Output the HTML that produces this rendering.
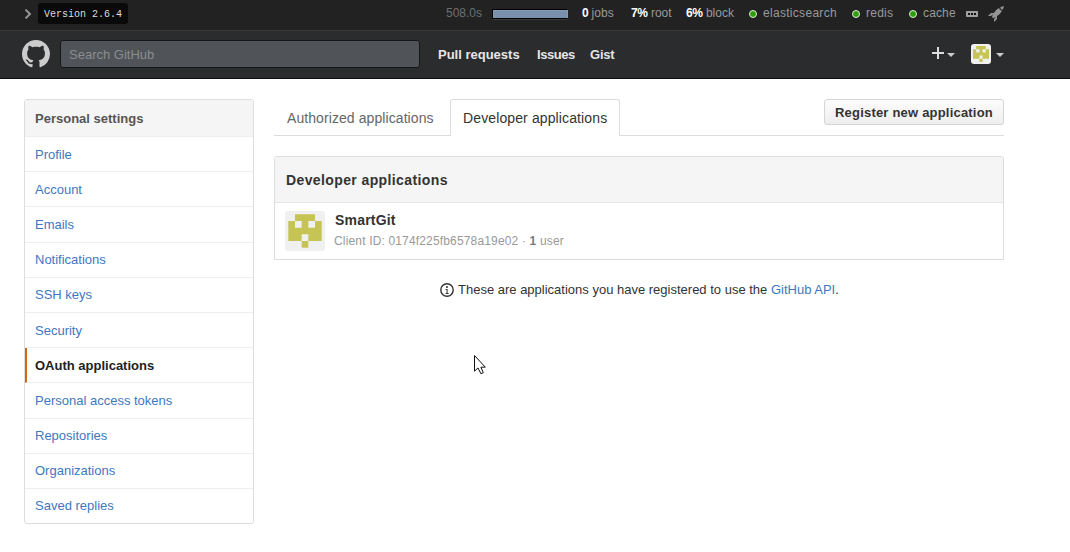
<!DOCTYPE html>
<html><head><meta charset="utf-8">
<style>
*{box-sizing:border-box;margin:0;padding:0}
html,body{width:1070px;height:552px;overflow:hidden;background:#fff}
body{font-family:"Liberation Sans",sans-serif;font-size:13px;color:#333;position:relative}
.abs{position:absolute}
#topbar{position:absolute;left:0;top:0;width:1070px;height:30px;background:#222}
#navline{position:absolute;left:0;top:30px;width:1070px;height:1px;background:#38393b}
#nav{position:absolute;left:0;top:31px;width:1070px;height:47px;background:#2b2c2e}
#navbot{position:absolute;left:0;top:78px;width:1070px;height:1px;background:#0c0c0c}
.ver{position:absolute;left:38px;top:3px;width:90px;height:21px;background:#0a0a0a;border-radius:3px;font-family:"Liberation Mono",monospace;font-size:10px;color:#dcdcdc;line-height:23px;padding-left:6px}
.tb{position:absolute;top:6px;font-size:12px;line-height:14px;color:#9a9a9a;white-space:nowrap}
.tb b{color:#fff;letter-spacing:-.4px}
.dot{position:absolute;top:10px;width:8px;height:8px;border-radius:50%;background:#2f9e0c;border:1px solid #e3f1dc}
.search{position:absolute;left:60px;top:40px;width:360px;height:28px;background:#505357;border:1px solid #151618;border-radius:3px;color:#8a8d90;font-size:13px;line-height:27px;padding-left:8px}
.nl{position:absolute;top:47px;font-weight:bold;color:#e6e6e6;font-size:13px;line-height:15px}
/* sidebar */
.side{position:absolute;left:24px;top:99px;width:230px;height:425px;border:1px solid #ddd;border-radius:3px;overflow:hidden}
.side .hd{height:37px;background:#f5f5f5;border-bottom:1px solid #eee;font-weight:bold;color:#555;padding:0 10px;line-height:38px}
.side .it{border-bottom:1px solid #eee;color:#4078c0;padding:8.6px 10px 7.4px;line-height:18.21px}
.side .it.sel{font-weight:bold;color:#222;border-left:2px solid #d26911;padding-left:8px}
.tabs{position:absolute;left:274px;top:135px;width:730px;height:1px;background:#ddd}
.tab1{position:absolute;left:287px;top:110px;font-size:14px;color:#666;line-height:17px;letter-spacing:.08px}
.tab2{position:absolute;left:450px;top:99px;width:170px;height:37px;background:#fff;border:1px solid #ddd;border-bottom:0;border-radius:3px 3px 0 0;font-size:14px;color:#333;line-height:37px;padding-left:12px;letter-spacing:.12px}
.btn{position:absolute;left:824px;top:99px;width:180px;height:26px;border:1px solid #d5d5d5;border-radius:3px;background:linear-gradient(#fcfcfc,#eee);font-weight:bold;color:#333;line-height:26px;padding-left:10px;letter-spacing:.2px}
.box{position:absolute;left:274px;top:156px;width:730px;height:104px;border:1px solid #ddd;border-radius:3px 3px 0 0;overflow:hidden}
.box .row{position:absolute;left:0;top:0;width:100%;height:100%}
.box .bh{height:46px;background:#f5f5f5;border-bottom:1px solid #e5e5e5;font-weight:bold;font-size:14px;color:#333;line-height:46px;padding-left:11px;letter-spacing:.39px}
</style></head><body>
<div id="topbar"></div><div id="navline"></div><div id="nav"></div><div id="navbot"></div>

<svg class="abs" style="left:24px;top:9px" width="8" height="10" viewBox="0 0 8 10"><path d="M1.5 0.6 L6 5 L1.5 9.4" fill="none" stroke="#999" stroke-width="1.9"/></svg>
<div class="ver">Version 2.6.4</div>
<div class="tb" style="left:446px;color:#6f6f6f">508.0s</div>
<div class="abs" style="left:492px;top:9px;width:75px;height:10px;background:#000"></div><div class="abs" style="left:493px;top:10px;width:75px;height:8px;background:#7890ab;box-shadow:inset 0 1px #819bb8,inset 1px 0 #819bb8,inset -1px 0 #819bb8"></div><div class="abs" style="left:493px;top:19px;width:74px;height:1px;background:#3a3a3a"></div>
<div class="tb" style="left:582px"><b>0</b> jobs</div>
<div class="tb" style="left:631px"><b>7%</b> root</div>
<div class="tb" style="left:686px"><b>6%</b> block</div>
<div class="dot" style="left:749px"></div><div class="tb" style="left:763px;letter-spacing:.3px">elasticsearch</div>
<div class="dot" style="left:852px"></div><div class="tb" style="left:866px;letter-spacing:.25px">redis</div>
<div class="dot" style="left:909px"></div><div class="tb" style="left:923px;letter-spacing:.15px">cache</div>

<div class="search">Search GitHub</div>
<div class="nl" style="left:438px">Pull requests</div>
<div class="nl" style="left:537px;letter-spacing:-.45px">Issues</div>
<div class="nl" style="left:590px;letter-spacing:-.2px">Gist</div>

<div class="side">
<div class="hd">Personal settings</div>
<div class="it">Profile</div>
<div class="it">Account</div>
<div class="it">Emails</div>
<div class="it">Notifications</div>
<div class="it">SSH keys</div>
<div class="it">Security</div>
<div class="it sel">OAuth applications</div>
<div class="it">Personal access tokens</div>
<div class="it">Repositories</div>
<div class="it">Organizations</div>
<div class="it" style="border-bottom:0">Saved replies</div>
</div>

<div class="tabs"></div>
<div class="tab1">Authorized applications</div>
<div class="tab2">Developer applications</div>
<div class="btn">Register new application</div>

<div class="box">
<div class="bh">Developer applications</div>
<div class="row">
<svg class="abs" style="left:10px;top:54px" width="40" height="40" viewBox="0 0 40 40"><rect width="40" height="40" rx="3" fill="#f0f0f0"/><path transform="translate(3.3 3.3) scale(6.68)" fill="#c6c455" d="M1 0h3v1h-3zM0 1h1v3h-1zM4 1h1v3h-1zM2 1h1v1h-1zM1 2h3v1h-3zM1 3h1v1h-1zM3 3h1v1h-1zM2 4h1v1h-1z"/></svg>
<div class="abs" style="left:60px;top:55px;font-weight:bold;font-size:14px;color:#333;line-height:17px;letter-spacing:.2px">SmartGit</div>
<div class="abs" style="left:59px;top:77px;font-size:12px;color:#999;line-height:15px;white-space:nowrap;letter-spacing:.16px">Client ID: 0174f225fb6578a19e02 &middot; <b style="color:#7a7a7a">1</b> user</div>
</div>
</div>


<svg class="abs" style="left:22px;top:40px" width="28" height="28" viewBox="0 0 16 16"><path fill="#ccc" d="M8 0C3.58 0 0 3.58 0 8c0 3.54 2.29 6.53 5.47 7.59.4.07.55-.17.55-.38 0-.19-.01-.82-.01-1.49-2.01.37-2.53-.49-2.69-.94-.09-.23-.48-.94-.82-1.130-.28-.15-.68-.52-.01-.53.63-.01 1.08.58 1.23.82.72 1.21 1.870.87 2.330.66.07-.52.28-.87.51-1.07-1.78-.2-3.64-.89-3.64-3.95 0-.87.31-1.59.82-2.15-.08-.2-.36-1.02.08-2.12 0 0 .67-.21 2.2.82.64-.18 1.32-.27 2-.27.68 0 1.36.09 2 .27 1.53-1.04 2.2-.82 2.2-.82.44 1.1.16 1.92.08 2.12.51.56.82 1.27.82 2.15 0 3.07-1.87 3.75-3.65 3.95.29.25.54.73.54 1.48 0 1.07-.01 1.93-.01 2.2 0 .21.15.46.55.38A8.013 8.013 0 0016 8c0-4.42-3.58-8-8-8z"/></svg>
<div class="abs" style="left:932px;top:52px;width:12px;height:2px;background:#ddd"></div>
<div class="abs" style="left:937px;top:47px;width:2px;height:12px;background:#ddd"></div>
<svg class="abs" style="left:947px;top:53px" width="8" height="4" viewBox="0 0 8 4"><path d="M0 0H8L4 4Z" fill="#ccc"/></svg>
<svg class="abs" style="left:971px;top:44px" width="20" height="20" viewBox="0 0 20 20"><rect width="20" height="20" rx="3" fill="#f0f0f0"/><path transform="translate(2 2) scale(3.2)" fill="#c6c455" d="M1 0h3v1h-3zM0 1h1v3h-1zM4 1h1v3h-1zM2 1h1v1h-1zM1 2h3v1h-3zM1 3h1v1h-1zM3 3h1v1h-1zM2 4h1v1h-1z"/></svg>
<svg class="abs" style="left:996px;top:53px" width="8" height="4" viewBox="0 0 8 4"><path d="M0 0H8L4 4Z" fill="#ccc"/></svg>
<svg class="abs" style="left:966px;top:11px" width="12" height="6" viewBox="0 0 12 6"><rect width="12" height="6" rx=".8" fill="#a0a0a0"/><rect x="2" y="2" width="2" height="2" fill="#111"/><rect x="5" y="2" width="2" height="2" fill="#111"/><rect x="8" y="2" width="2" height="2" fill="#111"/></svg>
<svg class="abs" style="left:988px;top:6px" width="16" height="16" viewBox="0 0 16 16"><path fill="#949494" d="M12.17 3.83c-.27-.27-.47-.55-.63-.88-.16-.31-.27-.66-.34-1.020-.58.33-1.16.7-1.73 1.130-.58.44-1.140.94-1.690 1.48-.7.7-1.330 1.81-1.780 2.45H3L0 10h3l2-2c-.34.77-1.02 2.98-1 3l1 1c.02.02 2.23-.64 3-1l-2 2v3l3-3v-3c.64-.45 1.75-1.09 2.45-1.78.55-.55 1.05-1.13 1.47-1.7.44-.58.81-1.16 1.14-1.72-.36-.08-.7-.19-1.03-.34a3.39 3.39 0 01-.86-.63zM16 0s-.09.38-.3 1.06c-.2.7-.55 1.58-1.06 2.66-.7-.08-1.27-.33-1.66-.72-.39-.39-.63-.94-.7-1.64C13.360.84 14.230.48 14.920.28 15.620.08 16 0 16 0z"/></svg>

<svg class="abs" style="left:440px;top:283px" width="14" height="14" viewBox="0 0 14 14"><circle cx="7" cy="7" r="6.2" fill="none" stroke="#333" stroke-width="1.4"/><circle cx="7" cy="4" r="1" fill="#333"/><path d="M5.6 6h2v4h1v1h-3v-1h1v-3h-1z" fill="#333"/></svg>
<div class="abs" style="left:458px;top:282px;font-size:13px;color:#333;line-height:15px;white-space:nowrap">These are applications you have registered to use the <span style="color:#4078c0">GitHub API</span>.</div>
<svg class="abs" style="left:474px;top:355px" width="14" height="20" viewBox="0 0 14 20"><path d="M0.5 0.5V16.2L4 12.9L6.9 18.7L9.3 17.7L6.9 12.2H11.3Z" fill="#fff" stroke="#111" stroke-width="1" stroke-linejoin="round"/></svg>
</body></html>
